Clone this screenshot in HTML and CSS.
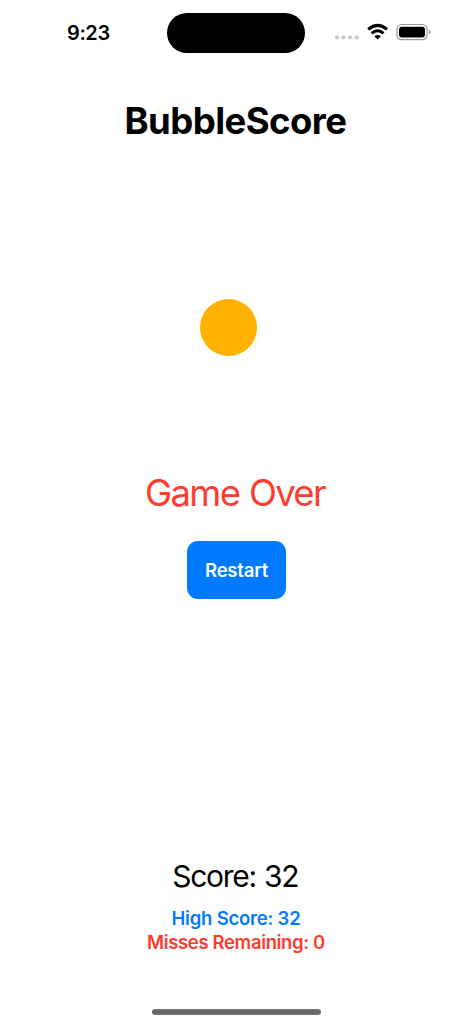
FILE: index.html
```html
<!DOCTYPE html>
<html lang="en">
<head>
<meta charset="utf-8">
<title>BubbleScore</title>
<link rel="stylesheet" href="styles.css">
</head>
<body>
<div class="screen">
  <header class="status">
    <span class="time">9:23</span>
    <div class="island"></div>
    <svg class="indicators" width="98" height="20" viewBox="334 22 98 20">
      <g fill="#cbcbcb"><circle cx="337" cy="37.4" r="2.1"/><circle cx="343.5" cy="37.4" r="2.1"/><circle cx="350.1" cy="37.4" r="2.1"/><circle cx="356.7" cy="37.4" r="2.1"/></g>
      <g fill="none" stroke="#000" stroke-width="3"><path d="M368.2 29.4Q377.6 21.4 387 29.4"/><path d="M371.7 33.3Q377.6 28.1 383.5 33.3"/></g>
      <path d="M374.4 36.3Q377.6 33.6 380.8 36.3L377.6 39.4Z"/>
      <rect x="397" y="24.5" width="30" height="15.2" rx="4.8" fill="none" stroke="#999" stroke-width="1.2"/>
      <rect x="399" y="26.7" width="26" height="10.8" rx="3"/>
      <path d="M428.8 29.8Q430.7 30.4 430.7 32.1T428.8 34.4Z" fill="#999"/>
    </svg>
  </header>
  <h1 class="title">BubbleScore</h1>
  <main class="field">
    <div class="bubble"></div>
    <p class="over">Game Over</p>
    <button class="restart">Restart</button>
  </main>
  <footer class="stats">
    <p class="score">Score: 32</p>
    <p class="high">High Score: 32</p>
    <p class="misses">Misses Remaining: 0</p>
  </footer>
  <div class="home"></div>
</div>
</body>
</html>
```
FILE: styles.css
```css
* { box-sizing: border-box; }
body { margin: 0; background: #fff; color: #000; font-family: Inter, sans-serif; }
p, h1 { margin: 0; white-space: nowrap; }
.screen { width: 472px; height: 1024px; display: flex; flex-direction: column; align-items: center; overflow: hidden; }
.status { width: 100%; height: 65px; display: grid; grid-template-columns: 167px 138px 1fr; align-items: center; }
.time { padding-left: 67px; font-size: 20px; font-weight: 600; line-height: 24px; letter-spacing: -0.4px; }
.island { height: 40px; border-radius: 20px; background: #000; }
.indicators { display: block; margin-left: 29px; margin-bottom: 1px; }
.title { margin-top: 32px; padding-right: 1px; font-size: 36.5px; line-height: 48px; font-weight: 700; letter-spacing: -0.55px; }
.field { width: 100%; flex: 1; display: flex; flex-direction: column; align-items: center; }
.bubble { width: 57px; height: 57px; margin: 154px 15px 0 0; border-radius: 50%; background: #ffb300; }
.over { margin-top: 113px; padding-right: 2px; font-size: 36.5px; line-height: 48px; letter-spacing: -1.65px; word-spacing: 1px; color: #ff3b30; }
.restart { width: 99px; height: 58px; margin: 24px 0 0 1px; padding: 0; border: 0; border-radius: 11px; background: #007aff; color: #fff; font: 600 18.5px/24px Inter, sans-serif; letter-spacing: -0.2px; }
.stats { text-align: center; }
.score { padding: 1px 1.5px 0 0; font-size: 30px; line-height: 40px; letter-spacing: -1.3px; word-spacing: 1px; margin-bottom: 10px; }
.high, .misses { font-size: 18.5px; font-weight: 600; }
.high { line-height: 24px; color: #007aff; letter-spacing: -0.22px; }
.misses { line-height: 25px; color: #ff3b30; letter-spacing: -0.36px; }
.home { width: 169px; height: 6px; margin: 54px 0 9px; border-radius: 3px; background: linear-gradient(#777, #606260 45%, #777); }
```
